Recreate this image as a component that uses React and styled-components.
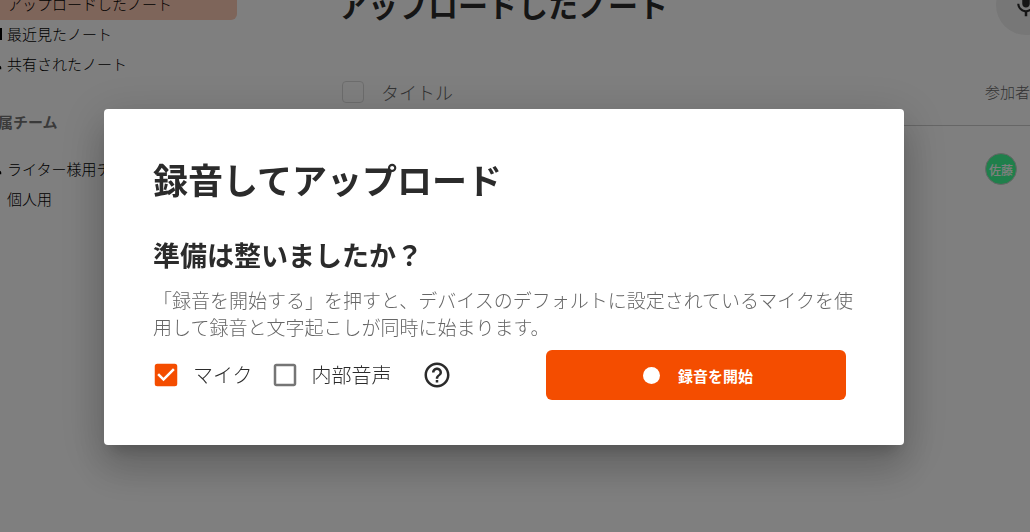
import React, { useState } from "react";
import styled, { createGlobalStyle } from "styled-components";
import {
  MdMic,
  MdHelpOutline,
  MdCheckBox,
  MdCheckBoxOutlineBlank,
  MdPeople
} from "react-icons/md";

const GlobalStyle = createGlobalStyle`
  * {
    box-sizing: border-box;
  }
  body {
    margin: 0;
    background-color: #fff;
    color: #2b2b2b;
    font-family: "Noto Sans CJK JP", sans-serif;
    font-weight: 300;
    overflow: hidden;
  }
  h1, h2, p {
    margin: 0;
  }
`;

const Page = styled.div`
  display: flex;
  min-height: 100vh;
`;

const Sidebar = styled.nav`
  flex: 0 0 257px;
  margin-left: -20px;
  margin-top: -12px;
`;

const NavLink = styled.a`
  display: flex;
  align-items: center;
  gap: 5px;
  height: ${props => (props.$active ? "32px" : "30px")};
  padding-left: 4px;
  border-radius: 6px;
  background-color: ${props => (props.$active ? "#fdcab5" : "transparent")};
  color: #000;
  font-size: 15px;
  line-height: 28px;
  text-decoration: none;
  white-space: nowrap;
  svg {
    flex: none;
    width: 18px;
    height: 18px;
  }
`;

const NavList = styled.div`
  margin-top: -1px;
`;

const TeamLabel = styled.p`
  margin: 32px 0 21px;
  padding-left: 3px;
  color: #757575;
  font-size: 15px;
  font-weight: 700;
  line-height: 22px;
`;

const Main = styled.main`
  flex: 1;
  min-width: 0;
  margin-top: -20px;
  padding-left: 101px;
`;

const MainHeader = styled.header`
  display: flex;
  justify-content: space-between;
  height: 79px;
`;

const PageTitle = styled.h1`
  font-size: 30px;
  line-height: 48px;
`;

const MicButton = styled.button`
  display: flex;
  align-items: center;
  justify-content: center;
  flex: none;
  width: 60px;
  height: 60px;
  margin: -5px -26px 0 0;
  padding: 0;
  border: none;
  border-radius: 50%;
  background-color: #eee;
  color: #2b2b2b;
  font-size: 30px;
`;

const NoteTable = styled.table`
  width: 100%;
  border-collapse: collapse;
  th {
    height: 66px;
    padding: 0;
    border-bottom: 1px solid #ccc;
    color: #666;
    font-size: 18px;
    font-weight: 300;
    text-align: left;
  }
  th:last-child {
    width: 45px;
    font-size: 15px;
    white-space: nowrap;
  }
  td {
    height: 88px;
    padding: 0;
  }
`;

const SelectAll = styled.label`
  display: flex;
  align-items: center;
  gap: 17px;
  padding-left: 4px;
  input {
    appearance: none;
    width: 22px;
    height: 22px;
    margin: 0;
    border: 1px solid #dadada;
    border-radius: 4px;
  }
`;

const Avatar = styled.span`
  display: flex;
  align-items: center;
  justify-content: center;
  width: 32px;
  height: 32px;
  border: 1px solid #ccc;
  border-radius: 50%;
  background-color: #3fff96;
  color: #fff;
  font-size: 12px;
  font-weight: 500;
`;

const Overlay = styled.div`
  position: fixed;
  inset: 0;
  display: flex;
  align-items: flex-start;
  justify-content: center;
  padding: 109px 24px 0 2px;
  background-color: rgba(0, 0, 0, 0.5);
`;

const Modal = styled.section`
  width: 100%;
  max-width: 800px;
  padding: 43px 46px 45px 49px;
  border-radius: 4px;
  background-color: #fff;
  box-shadow: 0 11px 15px -7px rgba(0, 0, 0, 0.2),
    0 24px 38px 3px rgba(0, 0, 0, 0.14), 0 9px 46px 8px rgba(0, 0, 0, 0.12);
`;

const ModalTitle = styled.h1`
  font-size: 35px;
  line-height: 54px;
`;

const Question = styled.h2`
  margin-top: 28px;
  font-size: 27px;
  line-height: 42px;
`;

const Description = styled.p`
  margin-top: 10px;
  color: #666;
  font-size: 19px;
  line-height: 27px;
`;

const Controls = styled.div`
  display: flex;
  align-items: center;
  margin-top: 10px;
  padding-left: 1px;
  padding-right: 12px;
`;

const CheckLabel = styled.label`
  position: relative;
  display: flex;
  align-items: center;
  gap: 12px;
  margin-right: 20px;
  font-size: 20px;
  line-height: 30px;
  svg {
    margin-left: -3px;
    width: 30px;
    height: 30px;
    color: ${props => (props.$checked ? "#f44d00" : "#757575")};
  }
  input {
    position: absolute;
    inset: 0;
    margin: 0;
    opacity: 0;
  }
`;

const HelpButton = styled.button`
  display: flex;
  margin-left: 10px;
  padding: 0;
  border: none;
  background: none;
  color: #2b2b2b;
  font-size: 30px;
`;

const RecordButton = styled.button`
  display: flex;
  align-items: center;
  justify-content: center;
  gap: 18px;
  width: 300px;
  height: 50px;
  margin-left: auto;
  padding: 0 2px 0 6px;
  border: none;
  border-radius: 6px;
  background-color: #f44d00;
  color: #fff;
  font-family: inherit;
  font-size: 15px;
  font-weight: 700;
`;

const Dot = styled.span`
  width: 17px;
  height: 17px;
  border-radius: 50%;
  background-color: #fff;
`;

const Check = ({ label, initial }) => {
  const [checked, setChecked] = useState(initial);
  return (
    <CheckLabel $checked={checked}>
      <input
        type="checkbox"
        checked={checked}
        onChange={() => setChecked(!checked)}
      />
      {checked ? <MdCheckBox /> : <MdCheckBoxOutlineBlank />}
      {label}
    </CheckLabel>
  );
};

const App = () => (
  <>
    <GlobalStyle />
    <Page>
      <Sidebar>
        <NavLink href="#uploaded" $active>
          <svg />
          アップロードしたノート
        </NavLink>
        <NavList>
          <NavLink href="#recent">
            <svg viewBox="0 0 18 18">
              <path d="M2 4h15v10H2z" fill="none" stroke="#000" strokeWidth="2" />
            </svg>
            最近見たノート
          </NavLink>
          <NavLink href="#shared">
            <MdPeople />
            共有されたノート
          </NavLink>
        </NavList>
        <TeamLabel>所属チーム</TeamLabel>
        <NavLink href="#writer">
          <MdPeople />
          ライター様用チーム
        </NavLink>
        <NavLink href="#personal">
          <svg />
          個人用
        </NavLink>
      </Sidebar>
      <Main>
        <MainHeader>
          <PageTitle>アップロードしたノート</PageTitle>
          <MicButton aria-label="録音">
            <MdMic />
          </MicButton>
        </MainHeader>
        <NoteTable>
          <thead>
            <tr>
              <th>
                <SelectAll>
                  <input type="checkbox" />
                  タイトル
                </SelectAll>
              </th>
              <th>参加者</th>
            </tr>
          </thead>
          <tbody>
            <tr>
              <td />
              <td>
                <Avatar>佐藤</Avatar>
              </td>
            </tr>
          </tbody>
        </NoteTable>
      </Main>
    </Page>
    <Overlay>
      <Modal role="dialog" aria-modal="true" aria-labelledby="record-title">
        <ModalTitle id="record-title">録音してアップロード</ModalTitle>
        <Question>準備は整いましたか？</Question>
        <Description>
          「録音を開始する」を押すと、デバイスのデフォルトに設定されているマイクを使用して録音と文字起こしが同時に始まります。
        </Description>
        <Controls>
          <Check label="マイク" initial={true} />
          <Check label="内部音声" initial={false} />
          <HelpButton aria-label="ヘルプ">
            <MdHelpOutline />
          </HelpButton>
          <RecordButton>
            <Dot />
            録音を開始
          </RecordButton>
        </Controls>
      </Modal>
    </Overlay>
  </>
);

export default App;
